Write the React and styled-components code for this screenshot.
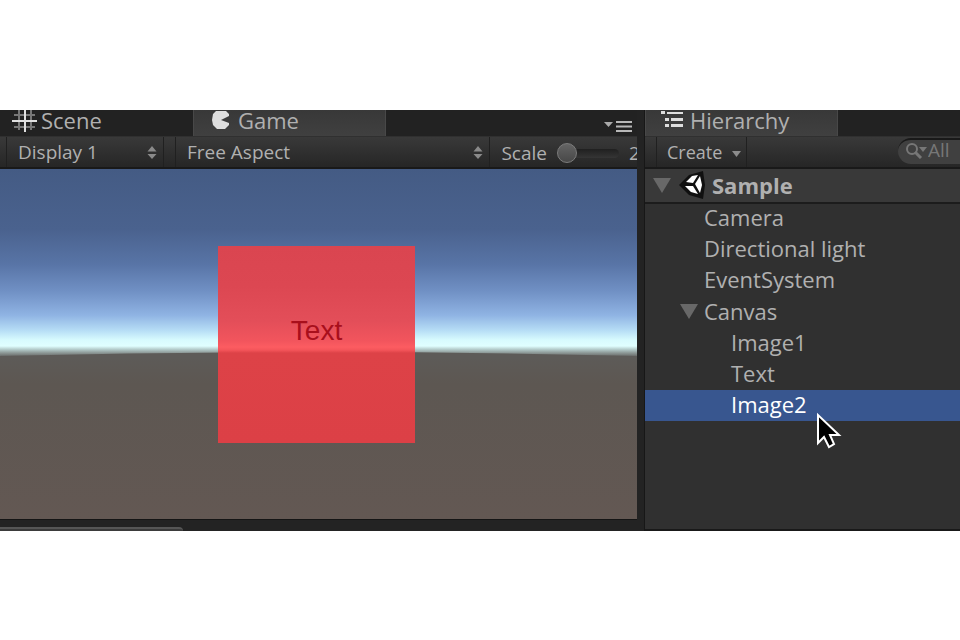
import React from "react";
import styled, { createGlobalStyle, css } from "styled-components";

const Global = createGlobalStyle`
  * { box-sizing: border-box; }
  body { margin: 0; background: #fff; font-family: "Open Sans", "Noto Sans", sans-serif; color: #b0b0b0; }
  button, input, select { font: inherit; color: inherit; }
`;

const Editor = styled.main`
  display: grid;
  grid-template-columns: minmax(0, 1fr) 315px;
  gap: 8px;
  margin: 110px 0;
  background: #232323;
`;
const Panel = styled.section`
  display: flex;
  flex-direction: column;
  min-width: 0;
`;
const TabBar = styled.div`
  display: flex;
  height: 26px;
  background: #222;
`;
const Tab = styled.button`
  display: flex;
  align-items: center;
  gap: ${(p) => p.$gap}px;
  width: 193px;
  height: 26px;
  padding: 0 0 4px ${(p) => p.$inset}px;
  border: 0;
  background: transparent;
  font-size: 22px;
  line-height: 20px;
  svg { flex: none; }
  ${(p) => p.$active && css`
    background: linear-gradient(#383838, #404040);
    border-left: 1px solid #484848;
    border-right: 1px solid #484848;
  `}
`;
const TabName = styled.span`
  padding-bottom: 2px;
`;
const TabMenu = styled.button`
  display: flex;
  align-items: flex-end;
  margin-left: auto;
  padding: 0 5px 4px;
  border: 0;
  background: transparent;
`;
const Toolbar = styled.div`
  display: flex;
  align-items: stretch;
  height: 33px;
  background: linear-gradient(#393939, #262626);
  border-top: 1px solid #303030;
  border-bottom: 2px solid #191919;
  font-size: 19px;
  line-height: 24px;
`;
const SelectWrap = styled.span`
  position: relative;
  display: flex;
  flex: ${(p) => (p.$grow ? "1 1 0" : "0 0 158px")};
  margin-left: ${(p) => (p.$grow ? 11 : 6)}px;
  border-left: 1px solid #202020;
  border-right: 1px solid #202020;
  svg { position: absolute; right: 6px; top: 9px; pointer-events: none; }
`;
const Select = styled.select`
  width: 100%;
  padding: 0 24px 0 11px;
  border: 0;
  background: transparent;
  appearance: none;
  option { background: #303030; }
`;
const ScaleLabel = styled.label`
  display: flex;
  align-items: center;
  gap: 10px;
  padding: 2px 0 0 11px;
`;
const ScaleRange = styled.input`
  width: 62px;
  height: 22px;
  margin: 0;
  appearance: none;
  background: transparent;
  &::-webkit-slider-runnable-track {
    height: 9px;
    border-radius: 5px;
    background: linear-gradient(#202020, #353535);
  }
  &::-webkit-slider-thumb {
    appearance: none;
    width: 20px;
    height: 20px;
    margin-top: -6px;
    border: 1px solid #7c7c7c;
    border-radius: 50%;
    background: linear-gradient(#646464, #484848);
  }
`;
const ScaleValue = styled.output`
  width: 8px;
  margin-left: 10px;
  padding-top: 4px;
  overflow: hidden;
`;
const GameView = styled.div`
  position: relative;
  display: flex;
  justify-content: center;
  height: 350px;
  padding: 77px 4px 0 0;
  background: linear-gradient(
    #445b84 0px, #4a628e 60px, #5874a6 95px, #7090c4 122px, #8fb3e3 146px,
    #b5dcf5 161px, #d8fbfe 171px, #e0ffff 177px, #b9d2d1 180px, #8b9694 184px,
    #6c6f6d 187px, #5d5b58 188px, #5d5752 215px, #635853 350px
  );
`;
const Curve = styled.svg`
  position: absolute;
  left: 0;
  top: 178px;
  width: 100%;
  height: 12px;
`;
const RedImage = styled.div`
  position: relative;
  width: 197px;
  height: 197px;
  padding-top: 68px;
  background: linear-gradient(
    #da4550 0px, #dc4752 40px, #e34e59 75px, #f2555d 95px, #fc5c61 101px,
    #f4555a 104px, #dd4247 107px, #dc4046 197px
  );
  color: #a80f1c;
  font-family: "Liberation Sans", sans-serif;
  font-size: 28px;
  line-height: 34px;
  text-align: center;
`;
const Footer = styled.div`
  display: flex;
  align-items: flex-end;
  height: 12px;
  border-top: 1px solid #151515;
`;
const FooterTab = styled.div`
  width: 183px;
  height: 4px;
  background: #3b3b3b;
  border-top: 2px solid #565656;
  border-top-right-radius: 4px;
`;
const HierarchyPanel = styled(Panel)`
  background: #303030;
  border-bottom: 2px solid #191919;
  box-shadow: -1px 0 #171717;
`;
const CreateButton = styled.button`
  display: flex;
  align-items: center;
  gap: 10px;
  width: 91px;
  margin-left: 11px;
  padding: 0 0 0 10px;
  border: 0;
  border-left: 1px solid #202020;
  border-right: 1px solid #202020;
  background: transparent;
  font-size: 18px;
  svg { margin-top: 3px; flex: none; }
`;
const Search = styled.label`
  display: flex;
  align-items: center;
  gap: 1px;
  width: 62px;
  height: 26px;
  margin: 1px 0 0 auto;
  padding: 0 0 4px 8px;
  border-top: 2px solid #191919;
  border-radius: 13px 0 0 13px;
  background: #404040;
  color: #777;
  svg { flex: none; }
`;
const SearchInput = styled.input`
  width: 30px;
  min-width: 0;
  height: 20px;
  padding: 0;
  border: 0;
  outline: 0;
  background: transparent;
  &::placeholder { color: #777; opacity: 1; }
`;
const SceneRow = styled.button`
  display: flex;
  align-items: center;
  height: 35px;
  padding: 0 0 2px 8px;
  border: 0;
  border-bottom: 2px solid #1c1c1c;
  background: #393939;
  font-size: 22px;
  font-weight: 700;
  line-height: 30px;
  svg + svg { margin: 0 6px 0 8px; }
`;
const Tree = styled.ul`
  list-style: none;
  margin: 0;
  padding: 0 0 108px;
  flex: 1;
`;
const Item = styled.li`
  display: flex;
`;
const ItemButton = styled.button`
  display: flex;
  align-items: center;
  gap: 6px;
  width: 100%;
  height: ${(p) => p.$height || 31}px;
  padding: 0 0 3px ${(p) => p.$indent}px;
  border: 0;
  background: ${(p) => (p.$selected ? "#38568f" : "transparent")};
  color: ${(p) => (p.$selected ? "#fff" : "#b0b0b0")};
  font-size: 22px;
  line-height: 26px;
`;
const FoldIcon = styled.svg`
  flex: none;
  margin-top: 2px;
`;
const Cursor = styled.svg`
  position: absolute;
  left: 171px;
  top: 22px;
  z-index: 1;
`;
const CursorAnchor = styled.span`
  position: relative;
  width: 0;
  order: -1;
`;

const UpDown = () => (
  <svg width="10" height="14" viewBox="0 0 10 14" fill="#8a8a8a" aria-hidden="true">
    <path d="M5 0l4.500 5.500h-9zM5 13L.5 8h9z" />
  </svg>
);
const Fold = () => (
  <FoldIcon width="18" height="15" viewBox="0 0 18 15" aria-hidden="true">
    <path d="M0 0h18L9 15z" fill="#686868" />
  </FoldIcon>
);

const items = [
  { name: "Camera", indent: 59, height: 29 },
  { name: "Directional light", indent: 59, height: 32 },
  { name: "EventSystem", indent: 59 },
  { name: "Canvas", indent: 35, height: 32, fold: true },
  { name: "Image1", indent: 86 },
  { name: "Text", indent: 86 },
  { name: "Image2", indent: 86, selected: true },
];

export default function App() {
  return (
    <>
      <Global />
      <Editor>
        <Panel aria-label="Game">
          <TabBar>
            <Tab $gap={4} $inset={12}>
              <svg width="25" height="22" viewBox="0 0 25 22" fill="none" aria-hidden="true">
                <path d="M7 0v20M19 0v20M2 5h21M2 17h21" stroke="#777" strokeWidth="2" />
                <path d="M13 0v22M0 11h25" stroke="#e0e0e0" strokeWidth="2" />
              </svg>
              <TabName>Scene</TabName>
            </Tab>
            <Tab $gap={8} $inset={18} $active>
              <svg width="18" height="20" viewBox="0 0 18 20" aria-hidden="true">
                <path d="M4 0h10l3 3v2L9 9l8 3v2l-4 4H5l-4-4-1-5 1-6z" fill="#dedede" />
              </svg>
              <TabName>Game</TabName>
            </Tab>
            <TabMenu aria-label="Tab options">
              <svg width="28" height="12" viewBox="0 0 28 12" aria-hidden="true">
                <path d="M0 2h9L4.500 7z" fill="#aaa" />
                <path d="M12 2h16M12 6.500h16M12 11h16" stroke="#b8b8b8" strokeWidth="2" />
              </svg>
            </TabMenu>
          </TabBar>
          <Toolbar>
            <SelectWrap>
              <Select aria-label="Display"><option>Display 1</option></Select>
              <UpDown />
            </SelectWrap>
            <SelectWrap $grow>
              <Select aria-label="Aspect"><option>Free Aspect</option></Select>
              <UpDown />
            </SelectWrap>
            <ScaleLabel>
              Scale
              <ScaleRange type="range" min="0" max="10" defaultValue="0" />
            </ScaleLabel>
            <ScaleValue>2</ScaleValue>
          </Toolbar>
          <GameView>
            <Curve viewBox="0 0 637 12" preserveAspectRatio="none" aria-hidden="true">
              <path d="M0 9Q318 1 637 9V12H0z" fill="#5d5b58" />
            </Curve>
            <RedImage>Text</RedImage>
          </GameView>
          <Footer><FooterTab /></Footer>
        </Panel>
        <HierarchyPanel aria-label="Hierarchy">
          <TabBar>
            <Tab $gap={7} $inset={15} $active>
              <svg width="22" height="20" viewBox="0 0 22 20" fill="#dedede" aria-hidden="true">
                <path d="M0 0h4v3H0zM6 1h16v2H6zM4 7h4v3H4zM10 7h12v3H10zM4 13h4v3H4zM10 13h12v3H10z" />
              </svg>
              <TabName>Hierarchy</TabName>
            </Tab>
          </TabBar>
          <Toolbar>
            <CreateButton>
              Create
              <svg width="9" height="6" viewBox="0 0 9 6" aria-hidden="true"><path d="M0 0h9L4.500 6z" fill="#8c8c8c" /></svg>
            </CreateButton>
            <Search>
              <svg width="21" height="18" viewBox="0 0 21 18" fill="none" aria-hidden="true">
                <circle cx="6" cy="8" r="5" stroke="#777" strokeWidth="2" />
                <path d="M9 11l6 6" stroke="#777" strokeWidth="3" />
                <path d="M13 6h8l-4 5z" fill="#777" />
              </svg>
              <SearchInput aria-label="Search" placeholder="All" />
            </Search>
          </Toolbar>
          <SceneRow>
            <Fold />
            <svg width="27" height="28" viewBox="0 0 27 28" aria-hidden="true">
              <path d="M0 14L10 4l14-4 2 14-2 14-14-4z" fill="#101010" />
              <path d="M7 11l6-6 6-1-5 8zM21 5l2 9-2 8-5-9zM6 15h8l5 8-7-2z" fill="#fff" />
            </svg>
            Sample
          </SceneRow>
          <Tree>
            {items.map((item) => (
              <Item key={item.name}>
                <ItemButton $indent={item.indent} $height={item.height} $selected={item.selected}>
                  {item.fold && <Fold />}
                  {item.name}
                </ItemButton>
                {item.selected && (
                  <CursorAnchor>
                    <Cursor width="26" height="38" viewBox="0 0 26 38" aria-hidden="true">
                      <path d="M2 3v28l6-6 5 10 5-3-4-9h9z" fill="#000" stroke="#fff" strokeWidth="2" />
                    </Cursor>
                  </CursorAnchor>
                )}
              </Item>
            ))}
          </Tree>
        </HierarchyPanel>
      </Editor>
    </>
  );
}
